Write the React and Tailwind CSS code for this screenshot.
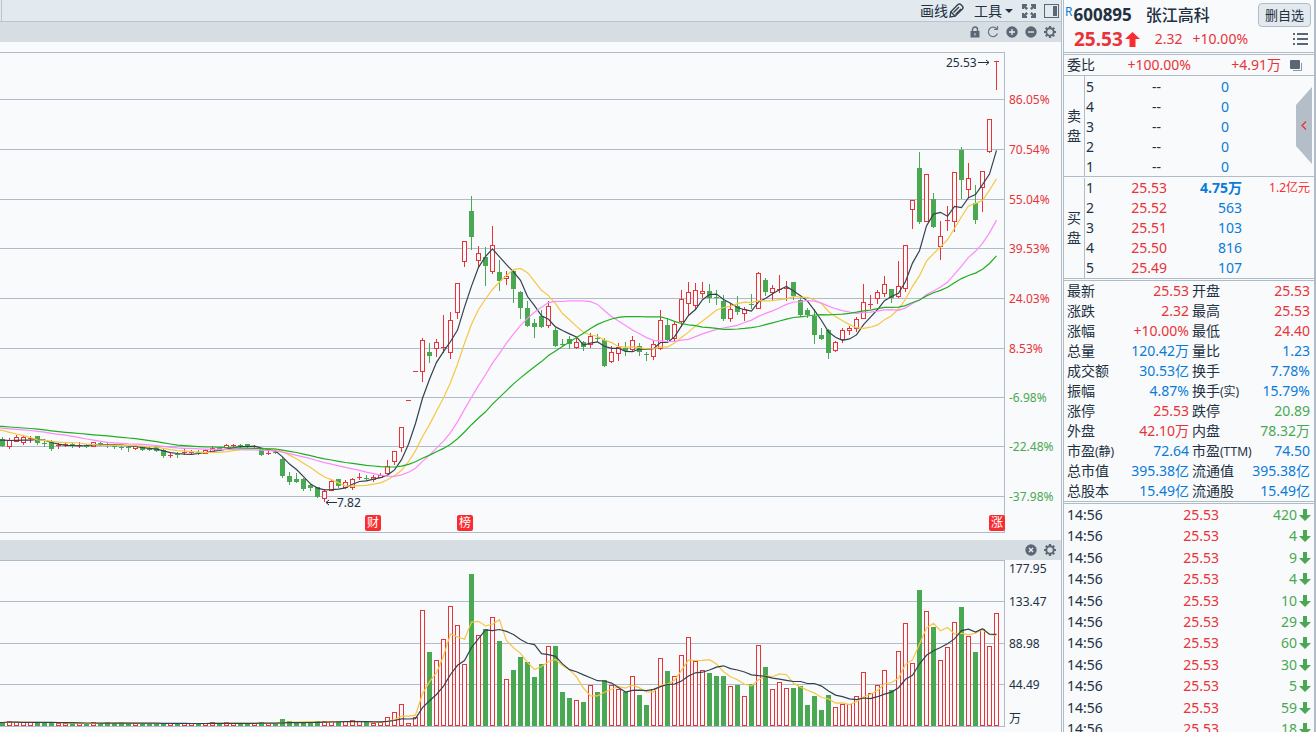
import { Fragment } from 'react';

const RED = '#e83438';
const GREEN = '#4ba852';
const GRID = '#afbbc8';
const INK = '#22303f';
const PAPER = '#f8fafc';

const STEP = 7;
const VOLUME_BASE = 726;

//// Candles: [direction, high, body top, body bottom, low, volume top] ////
const candles = [
  ['g', 437, 439, 446, 446, 722], ['r', 438, 440, 446, 448, 721], ['r', 435, 437, 441, 441, 722], ['r', 436, 437, 442, 444, 722],
  ['r', 436, 438, 438, 442, 722], ['g', 436, 436, 443, 444, 722], ['g', 439, 443, 443, 446, 722], ['g', 440, 441, 449, 450, 722],
  ['r', 443, 445, 445, 448, 723], ['r', 442, 444, 444, 446, 723], ['g', 443, 444, 444, 447, 723], ['r', 442, 445, 445, 447, 723],
  ['g', 444, 445, 447, 447, 723], ['r', 442, 442, 446, 446, 722], ['g', 441, 443, 443, 445, 723], ['g', 442, 444, 444, 447, 722],
  ['g', 444, 446, 446, 448, 723], ['g', 445, 447, 447, 449, 722], ['g', 446, 447, 447, 451, 723], ['r', 445, 446, 448, 449, 723],
  ['g', 446, 446, 450, 450, 723], ['g', 447, 449, 449, 450, 723], ['g', 446, 447, 451, 451, 723], ['g', 449, 450, 456, 457, 723],
  ['r', 453, 455, 455, 457, 723], ['g', 452, 454, 454, 457, 723], ['r', 449, 452, 452, 454, 723], ['r', 450, 452, 452, 454, 723],
  ['g', 450, 452, 452, 454, 723], ['r', 449, 450, 453, 453, 723], ['r', 446, 448, 451, 451, 722], ['g', 447, 448, 448, 449, 723],
  ['r', 444, 445, 447, 447, 722], ['r', 444, 445, 445, 447, 723], ['g', 444, 445, 445, 447, 723], ['g', 444, 444, 447, 448, 723],
  ['r', 445, 446, 446, 448, 723], ['g', 449, 449, 455, 455, 722], ['r', 451, 453, 453, 454, 723], ['g', 450, 452, 452, 453, 723],
  ['g', 457, 459, 476, 477, 719], ['g', 472, 476, 482, 484, 721], ['g', 473, 479, 482, 482, 722], ['g', 478, 479, 489, 490, 722],
  ['g', 483, 485, 488, 490, 722], ['g', 487, 487, 497, 497, 721], ['r', 489, 491, 498, 501, 721], ['r', 479, 481, 490, 490, 721],
  ['g', 479, 479, 486, 487, 721], ['r', 480, 482, 487, 488, 721], ['r', 478, 479, 487, 489, 720], ['r', 473, 477, 477, 479, 721],
  ['g', 475, 478, 478, 480, 722], ['r', 475, 477, 479, 481, 723], ['r', 473, 475, 477, 477, 722], ['r', 460, 466, 473, 473, 717],
  ['r', 451, 451, 461, 464, 712], ['r', 427, 427, 447, 451, 704], ['r', 400, 400, 400, 400, 723], ['r', 371, 371, 371, 371, 717],
  ['r', 338, 340, 371, 381, 610], ['g', 343, 352, 356, 362, 652], ['r', 339, 342, 348, 356, 660], ['r', 315, 347, 347, 352, 639],
  ['r', 312, 320, 352, 358, 606], ['r', 283, 283, 312, 318, 625], ['r', 241, 241, 261, 266, 664], ['g', 196, 211, 237, 249, 574],
  ['r', 246, 253, 260, 266, 635], ['g', 247, 257, 266, 285, 629], ['r', 226, 245, 271, 273, 617], ['g', 260, 272, 281, 290, 641],
  ['r', 271, 276, 278, 284, 679], ['g', 269, 271, 289, 302, 670], ['g', 291, 292, 308, 318, 657], ['g', 301, 308, 326, 326, 662],
  ['g', 319, 323, 327, 337, 677], ['g', 310, 316, 327, 327, 664], ['r', 301, 306, 325, 327, 646], ['g', 328, 330, 346, 346, 646],
  ['g', 339, 344, 344, 346, 692], ['g', 336, 339, 344, 348, 698], ['r', 338, 342, 347, 348, 700], ['g', 341, 342, 347, 350, 702],
  ['r', 333, 336, 344, 347, 685], ['g', 334, 338, 338, 341, 692], ['g', 338, 340, 366, 366, 680], ['r', 346, 352, 361, 362, 685],
  ['r', 343, 347, 353, 360, 689], ['g', 342, 348, 351, 355, 692], ['r', 336, 340, 349, 351, 676], ['g', 343, 346, 352, 355, 695],
  ['g', 352, 354, 354, 360, 705], ['r', 340, 344, 356, 359, 689], ['r', 310, 320, 348, 349, 658], ['g', 318, 325, 340, 340, 671],
  ['r', 321, 324, 338, 341, 676], ['r', 290, 299, 321, 326, 655], ['r', 282, 292, 303, 315, 637], ['r', 283, 290, 305, 308, 661],
  ['r', 282, 291, 293, 297, 670], ['g', 284, 291, 298, 302, 673], ['g', 290, 297, 297, 304, 676], ['g', 295, 301, 319, 320, 676],
  ['r', 303, 309, 318, 321, 686], ['g', 296, 306, 312, 314, 685], ['r', 307, 309, 313, 320, 696], ['g', 294, 304, 304, 308, 684],
  ['r', 272, 273, 308, 308, 645], ['g', 278, 280, 292, 295, 667], ['r', 285, 288, 292, 300, 689], ['r', 275, 289, 289, 292, 682],
  ['r', 281, 288, 288, 300, 688], ['g', 282, 282, 296, 299, 688], ['g', 297, 300, 315, 316, 686], ['g', 308, 310, 315, 317, 705],
  ['g', 309, 316, 335, 343, 696], ['g', 328, 335, 339, 339, 710], ['g', 329, 330, 353, 358, 695], ['r', 341, 342, 350, 351, 707],
  ['r', 328, 330, 339, 342, 704], ['r', 326, 328, 330, 334, 704], ['r', 317, 319, 328, 331, 696], ['r', 284, 302, 318, 318, 672],
  ['r', 295, 304, 304, 308, 693], ['r', 290, 292, 298, 303, 685], ['r', 276, 284, 293, 296, 670], ['g', 289, 289, 298, 302, 690],
  ['r', 261, 286, 296, 297, 651], ['r', 245, 245, 288, 291, 623], ['r', 200, 200, 209, 228, 663], ['g', 152, 168, 222, 223, 590],
  ['r', 174, 174, 221, 221, 611], ['g', 193, 199, 227, 227, 627], ['r', 221, 236, 246, 259, 660], ['r', 206, 220, 220, 230, 647],
  ['r', 172, 172, 221, 231, 622], ['g', 147, 150, 180, 198, 607], ['r', 163, 178, 189, 197, 636], ['g', 185, 203, 220, 223, 652],
  ['r', 171, 171, 187, 211, 629], ['r', 119, 119, 151, 152, 646], ['r', 61, 61, 61, 89, 613],
];

// closes of the thirty sessions left of the visible window, oldest first
const earlierCloses = [
  ...Array(10).fill(422), ...Array(10).fill(426), ...Array(6).fill(420), ...Array(4).fill(438),
];

const priceLines = [
  [52, ''], [99, '86.05%'], [149, '70.54%'], [199, '55.04%'], [248, '39.53%'], [298, '24.03%'],
  [348, '8.53%'], [397, '-6.98%'], [446, '-22.48%'], [496, '-37.98%'], [532, ''],
];

const volumeLines = [[560, ''], [601, '133.47'], [643, '88.98'], [684, '44.49'], [726, '']];

const sells = [5, 4, 3, 2, 1];
const buys = [
  [1, '25.53', '4.75万', '1.2亿元'],
  [2, '25.52', '563', ''],
  [3, '25.51', '103', ''],
  [4, '25.50', '816', ''],
  [5, '25.49', '107', ''],
];

const stats = [
  ['最新', '', '25.53', 'r', '开盘', '', '25.53', 'r'],
  ['涨跌', '', '2.32', 'r', '最高', '', '25.53', 'r'],
  ['涨幅', '', '+10.00%', 'r', '最低', '', '24.40', 'r'],
  ['总量', '', '120.42万', 'b', '量比', '', '1.23', 'b'],
  ['成交额', '', '30.53亿', 'b', '换手', '', '7.78%', 'b'],
  ['振幅', '', '4.87%', 'b', '换手', '(实)', '15.79%', 'b'],
  ['涨停', '', '25.53', 'r', '跌停', '', '20.89', 'g'],
  ['外盘', '', '42.10万', 'r', '内盘', '', '78.32万', 'g'],
  ['市盈', '(静)', '72.64', 'b', '市盈', '(TTM)', '74.50', 'b'],
  ['总市值', '', '395.38亿', 'b', '流通值', '', '395.38亿', 'b'],
  ['总股本', '', '15.49亿', 'b', '流通股', '', '15.49亿', 'b'],
];

const tone = { r: 'text-[#e83438]', g: 'text-[#4ba852]', b: 'text-[#0b7bd6]' };

const trades = [420, 4, 9, 4, 10, 29, 60, 30, 5, 59, 18];

const centre = (i) => 2.5 + i * STEP;

//// Moving average over the last n values, as polyline points ////
const averagePoints = (values, n) => {
  const offset = values.length - candles.length;
  const means = candles.map((_, i) => {
    const part = values.slice(Math.max(0, i + offset - n + 1), i + offset + 1);
    return part.reduce((a, b) => a + b, 0) / part.length + 0.5;
  });
  return [`0,${means[0].toFixed(1)}`, ...means.map((m, i) => `${centre(i)},${m.toFixed(1)}`)].join(' ');
};

const closes = [...earlierCloses, ...candles.map((c) => (c[0] === 'r' ? c[2] : c[3]))];
const volumes = candles.map((c) => c[5]);

function Candle({ i, data }) {
  const [dir, high, top, bottom, low] = data;
  const x = centre(i);
  const color = dir === 'r' ? RED : GREEN;
  return (
    <g stroke={color}>
      {low > high && <line x1={x} x2={x} y1={high} y2={low + 1} />}
      {top === bottom && <line x1={x - 2.5} x2={x + 2.5} y1={top + 0.5} y2={top + 0.5} />}
      {top !== bottom && dir === 'r' && <rect x={x - 2} y={top + 0.5} width="4" height={bottom - top} fill={PAPER} />}
      {top !== bottom && dir === 'g' && <rect x={x - 2.5} y={top} width="5" height={bottom - top} fill={color} stroke="none" />}
    </g>
  );
}

function Badge({ x, children }) {
  return (
    <g>
      <rect x={x} y="515" width="16" height="16" rx="2" fill="#fb2c30" />
      <text x={x + 8} y="527" fontSize="12" fill="#fff" textAnchor="middle">{children}</text>
    </g>
  );
}

function PriceChart() {
  return (
    <svg viewBox="0 42 1061 498" className="block h-auto w-full" role="img" aria-label="K线图">
      <g shapeRendering="crispEdges">
        {priceLines.map(([y]) => (
          <line key={y} x1="0" x2="1005" y1={y + 0.5} y2={y + 0.5} stroke={GRID} />
        ))}
        <line x1="1004.5" x2="1004.5" y1="52" y2="533" stroke={GRID} />
        {candles.map((c, i) => <Candle key={i} i={i} data={c} />)}
      </g>
      <g fill="none" strokeWidth="1.2">
        <polyline points={averagePoints(closes, 5)} stroke="#33424f" />
        <polyline points={averagePoints(closes, 10)} stroke="#f5c842" />
        <polyline points={averagePoints(closes, 20)} stroke="#fd8bfb" />
        <polyline points={averagePoints(closes, 30)} stroke="#22ae22" />
      </g>
      <g fontSize="12">
        {priceLines.filter(([, label]) => label).map(([y, label]) => (
          <text key={y} x="1009" y={y + 5} fill={label[0] === '-' ? GREEN : RED}>{label}</text>
        ))}
        <text x="946" y="67" fill={INK}>25.53</text>
        <text x="337" y="507" fill={INK}>7.82</text>
      </g>
      <path d="M978 62.5h11M986 60l3 2.500l-3 2.500M337 502.500h-11M329 500l-3 2.500l3 2.500" fill="none" stroke={INK} />
      <Badge x={365}>财</Badge>
      <Badge x={457}>榜</Badge>
      <Badge x={989}>涨</Badge>
    </svg>
  );
}

function VolumeChart() {
  return (
    <svg viewBox="0 560 1061 172" className="block h-auto w-full" role="img" aria-label="成交量">
      <g shapeRendering="crispEdges">
        {volumeLines.map(([y]) => (
          <line key={y} x1="0" x2="1005" y1={y + 0.5} y2={y + 0.5} stroke={GRID} />
        ))}
        <line x1="1004.5" x2="1004.5" y1="560" y2="727" stroke={GRID} />
        {candles.map((c, i) =>
          c[0] === 'r' ? (
            <rect key={i} x={centre(i) - 2} y={c[5] + 0.5} width="4" height={VOLUME_BASE - 1 - c[5]} fill={PAPER} stroke={RED} />
          ) : (
            <rect key={i} x={centre(i) - 2.5} y={c[5]} width="5" height={VOLUME_BASE - c[5]} fill={GREEN} />
          )
        )}
      </g>
      <g fill="none" strokeWidth="1.2">
        <polyline points={averagePoints(volumes, 5)} stroke="#f5c842" />
        <polyline points={averagePoints(volumes, 10)} stroke="#33424f" />
      </g>
      <g fontSize="12" fill={INK}>
        <text x="1009" y="573">177.95</text>
        {volumeLines.filter(([, label]) => label).map(([y, label]) => (
          <text key={y} x="1009" y={y + 5}>{label}</text>
        ))}
        <text x="1009" y="723">万</text>
      </g>
    </svg>
  );
}

//// Icons ////
function PencilIcon() {
  return (
    <svg width="15" height="15" viewBox="0 0 15 15" fill="none" stroke="#33404e" strokeWidth="1.400">
      <path d="M1 14l.8-5.200L9 1.600a2 2 0 0 1 2.800 0l1.600 1.600a2 2 0 0 1 0 2.800L6.200 13.200z" />
      <path d="M4.500 9.500L10 4M6.500 11.500L12 6M1.800 8.800l4.400 4.400" />
    </svg>
  );
}

function ExpandIcon() {
  return (
    <svg width="14" height="14" viewBox="0 0 14 14" fill="#5c6775">
      <path d="M0 0h5v2H3.700L6 4.300 4.300 6 2 3.700V5H0zM14 0v5h-2V3.700L9.700 6 8 4.300 10.300 2H9V0zM0 14V9h2v1.300L4.300 8 6 9.700 3.700 12H5v2zM14 14H9v-2h1.300L8 9.700 9.700 8l2.300 2.300V9h2z" />
    </svg>
  );
}

function SidePanelIcon() {
  return (
    <svg width="15" height="14" viewBox="0 0 15 14">
      <rect x=".5" y=".5" width="14" height="13" fill="#e2e9ef" stroke="#5c6775" />
      <path d="M9 2h4v10H9z" fill="#5c6775" />
    </svg>
  );
}

function LockIcon() {
  return (
    <svg width="10" height="12" viewBox="0 0 10 12">
      <path d="M2.500 6V3.500a2.500 2.500 0 0 1 5 0V6" fill="none" stroke="#5c6775" strokeWidth="1.400" />
      <path d="M.5 5h9v6.500h-9z" fill="#5c6775" />
      <path d="M4.500 7h1v2.500h-1z" fill="#d6dde3" />
    </svg>
  );
}

function RefreshIcon() {
  return (
    <svg width="12" height="12" viewBox="0 0 12 12" fill="none" stroke="#6b7582" strokeWidth="1.200">
      <path d="M9.800 3A4.700 4.700 0 1 0 10.500 7.500M10.500 0v3.500H7" />
    </svg>
  );
}

function CircleIcon({ mark }) {
  return (
    <svg width="12" height="12" viewBox="0 0 12 12">
      <circle cx="6" cy="6" r="5.700" fill="#5c6775" />
      <path d={mark} stroke="#e8edf1" strokeWidth="1.300" fill="none" />
    </svg>
  );
}

function GearIcon() {
  return (
    <svg width="12" height="12" viewBox="0 0 12 12" fill="none" stroke="#5c6775">
      <circle cx="6" cy="6" r="3.700" strokeWidth="1.900" />
      <path d="M6 0v2M6 10v2M0 6h2M10 6h2M1.800 1.800l1.400 1.400M8.800 8.800l1.400 1.400M1.800 10.200l1.400-1.400M8.800 3.200l1.400-1.400" strokeWidth="2.200" />
    </svg>
  );
}

function Toolbar() {
  return (
    <div className="flex h-[22px] items-center justify-end border-b border-[#b9c4ce] bg-[#e2e9ef] pr-[2px] text-sm leading-5">
      <div className="mr-auto ml-px h-full w-px bg-[#b9c4ce]" />
      <button className="flex items-center gap-px">画线<PencilIcon /></button>
      <button className="ml-[10px] flex items-center gap-[3px]">
        工具
        <svg width="8" height="4" viewBox="0 0 8 4"><path d="M0 0h8L4 4z" fill={INK} /></svg>
      </button>
      <button className="ml-[9px]" aria-label="全屏"><ExpandIcon /></button>
      <button className="ml-2" aria-label="侧栏"><SidePanelIcon /></button>
    </div>
  );
}

function ChartTools() {
  return (
    <div className="flex h-5 items-center justify-end gap-[7px] bg-[#d6dde3] pr-[5px]">
      <button aria-label="锁定"><LockIcon /></button>
      <button aria-label="刷新"><RefreshIcon /></button>
      <button aria-label="放大"><CircleIcon mark="M3 6h6M6 3v6" /></button>
      <button aria-label="缩小"><CircleIcon mark="M3 6h6" /></button>
      <button aria-label="设置"><GearIcon /></button>
    </div>
  );
}

function QuoteHeader() {
  return (
    <header className="flex h-[53px] flex-col border-b border-[#b0bdc9] pl-px pr-[3px]">
      <div className="flex h-[30px] items-center">
        <span className="self-start pt-[3px] text-xs leading-[18px] text-[#0b7bd6]">R</span>
        <h1 className="ml-px flex items-center">
          <span className="text-[17px] font-bold">600895</span>
          <span className="ml-[14px] text-base font-medium">张江高科</span>
        </h1>
        <button className="ml-auto h-6 rounded-sm border border-[#b0bdc9] bg-[#e2e9ef] px-[6px] text-[13px] leading-5">删自选</button>
      </div>
      <div className="flex h-[18px] items-center pl-[9px] text-sm leading-5 text-[#e83438]">
        <span className="text-[19px] font-bold">25.53</span>
        <svg className="ml-[2px]" width="15" height="15" viewBox="0 0 15 15"><path d="M7.500 0L15 7h-4.500v8h-6V7H0z" fill="#fb2c30" /></svg>
        <span className="ml-[15px]">2.32</span>
        <span className="ml-[10px]">+10.00%</span>
        <button className="ml-auto mr-[3px]" aria-label="列表">
          <svg width="15" height="12" viewBox="0 0 15 12" fill="#5c6775">
            <path d="M0 0h2v2H0zM4 0h11v2H4zM0 5h2v2H0zM4 5h11v2H4zM0 10h2v2H0zM4 10h11v2H4z" />
          </svg>
        </button>
      </div>
    </header>
  );
}

function OrderBook() {
  return (
    <section className="mt-px border-y border-[#b0bdc9] text-sm leading-5">
      <div className="flex h-[21px] items-end border-b border-[#b0bdc9] pl-[3px]">
        <span className="w-9">委比</span>
        <span className="w-[88px] text-right text-[#e83438]">+100.00%</span>
        <span className="w-[90px] text-right text-[#e83438]">+4.91万</span>
        <button className="ml-[9px] self-center" aria-label="复制">
          <svg width="12" height="11" viewBox="0 0 12 11">
            <path d="M3 10.500h8.500V3" fill="none" stroke="#8c96a1" />
            <rect width="10" height="9" rx="1" fill="#5c6775" />
          </svg>
        </button>
      </div>
      <div className="flex h-[101px] border-b border-[#b0bdc9]">
        <div className="flex w-[21px] flex-col items-center justify-center border-r border-[#b0bdc9]">
          <span>卖</span>
          <span>盘</span>
        </div>
        <table className="mt-px flex-1 table-fixed self-start">
          <tbody>
            {sells.map((level) => (
              <tr key={level} className="h-5">
                <td className="w-[15px] p-0 pl-px">{level}</td>
                <td className="w-[67px] p-0 pr-[6px] text-right">--</td>
                <td className="w-[75px] p-0 pr-[13px] text-right text-[#0b7bd6]">0</td>
                <td className="p-0" />
              </tr>
            ))}
          </tbody>
        </table>
      </div>
      <div className="flex h-[101px] pt-px">
        <div className="flex w-[21px] flex-col items-center justify-center border-r border-[#b0bdc9]">
          <span>买</span>
          <span>盘</span>
        </div>
        <table className="flex-1 table-fixed">
          <tbody>
            {buys.map(([level, price, volume, amount], i) => (
              <tr key={level} className="h-5">
                <td className="w-[15px] p-0 pl-px">{level}</td>
                <td className="w-[67px] p-0 text-right text-[#e83438]">{price}</td>
                <td className={`w-[75px] p-0 text-right text-[#0b7bd6] ${i === 0 ? 'font-bold' : ''}`}>{volume}</td>
                <td className="p-0 pr-1 text-right text-xs leading-5 text-[#fb2c30]">{amount}</td>
              </tr>
            ))}
          </tbody>
        </table>
      </div>
    </section>
  );
}

function Stats() {
  return (
    <section className="mt-px border-y border-[#b0bdc9] pl-[3px] pr-1 text-sm leading-5">
      <table className="w-full table-fixed">
        <tbody>
          {stats.map((row) => (
            <tr key={row[0] + row[1]} className="h-5">
              {[0, 4].map((k) => (
                <Fragment key={k}>
                  <th className={`p-0 text-left font-normal whitespace-nowrap ${k ? 'w-[62px] pl-[3px]' : 'w-[50px]'}`}>
                    {row[k]}
                    <span className="text-xs">{row[k + 1]}</span>
                  </th>
                  <td className={`p-0 text-right whitespace-nowrap ${k ? '' : 'w-[72px]'} ${tone[row[k + 3]]}`}>{row[k + 2]}</td>
                </Fragment>
              ))}
            </tr>
          ))}
        </tbody>
      </table>
    </section>
  );
}

function Trades() {
  return (
    <section className="mt-px border-t border-[#b0bdc9] pl-[3px] pr-[3px]">
      <ul className="grid h-[236px] grid-rows-11 text-sm leading-5">
        {trades.map((volume, i) => (
          <li key={i} className="flex items-center">
            <span className="w-[60px]">14:56</span>
            <span className="w-[92px] text-right text-[#e83438]">25.53</span>
            <span className="ml-auto text-[#4ba852]">{volume}</span>
            <svg className="ml-[2px]" width="12" height="12" viewBox="0 0 12 12"><path d="M4 0h4v6h4l-6 6-6-6h4z" fill={GREEN} /></svg>
          </li>
        ))}
      </ul>
    </section>
  );
}

function App() {
  return (
    <div className="flex h-screen gap-px overflow-hidden bg-[#f8fafc] font-['Noto_Sans','Noto_Sans_CJK_SC',sans-serif] text-[#22303f]">
      <main className="min-w-0 flex-1 border-r border-[#b0bdc9]">
        <Toolbar />
        <ChartTools />
        <PriceChart />
        <div className="flex h-5 items-center justify-end gap-[7px] bg-[#d6dde3] pr-[5px]">
          <button aria-label="关闭"><CircleIcon mark="M4 4l4 4M8 4l-4 4" /></button>
          <button aria-label="设置"><GearIcon /></button>
        </div>
        <VolumeChart />
      </main>

      <aside className="relative w-[253px] shrink-0 border-l border-r-2 border-[#b0bdc9]">
        <QuoteHeader />
        <OrderBook />
        <Stats />
        <Trades />
        {/* Collapse handle */}
        <button className="absolute top-[87px] right-[2px]" aria-label="收起">
          <svg width="16" height="77" viewBox="0 0 16 77">
            <path d="M16 0v77L0 59V18z" fill="#b3bec8" />
            <path d="M10 34.500l-4 4 4 4" fill="none" stroke={RED} strokeWidth="1.300" />
          </svg>
        </button>
      </aside>
    </div>
  );
}

export default App;
